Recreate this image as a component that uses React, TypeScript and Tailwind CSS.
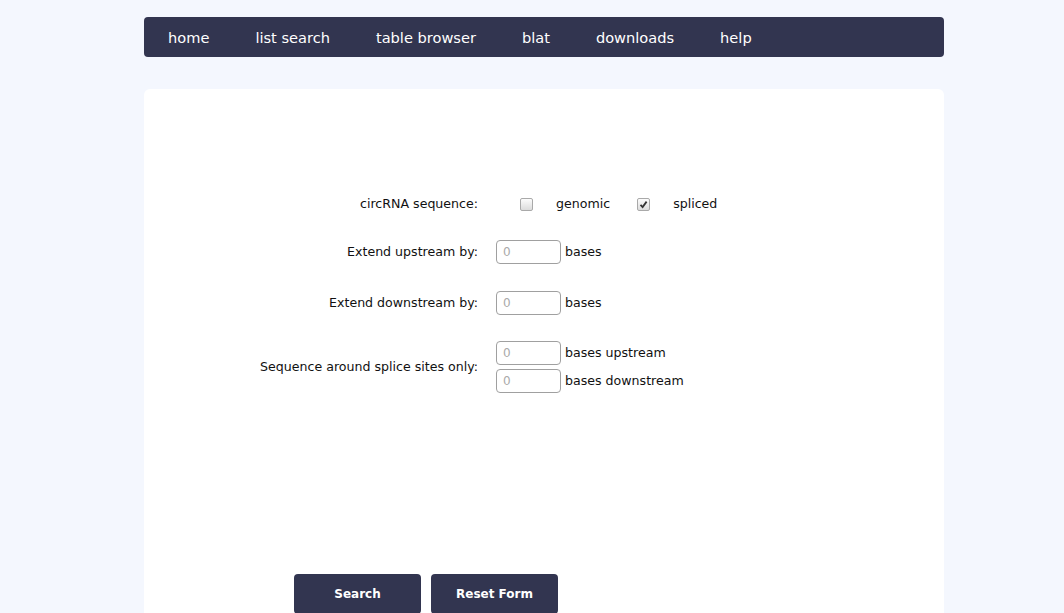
import React from 'react';

const navItems = ['home', 'list search', 'table browser', 'blat', 'downloads', 'help'];

const Box = ({ checked }: { checked?: boolean }) => (
  <span className="flex h-[13px] w-[13px] items-center justify-center rounded-[2px] border border-[#a9a9a9] bg-gradient-to-b from-[#fcfcfc] to-[#dcdcdc]">
    {checked && (
      <svg width="9" height="9" viewBox="0 0 9 9">
        <path d="M1.5 4.8 L3.6 7 L7.6 1.6" fill="none" stroke="#333" strokeWidth="1.8" />
      </svg>
    )}
  </span>
);

const NumInput = () => (
  <input
    type="text"
    placeholder="0"
    className="h-[24px] w-[65px] rounded-[4px] border border-[#a0a0a0] bg-white px-[6px] text-[12px] text-[#333] placeholder:text-[#aaa] outline-none"
  />
);

const Row = ({ label, children, className = '' }: { label: string; children: React.ReactNode; className?: string }) => (
  <div className={`flex items-center ${className}`}>
    <div className="w-[334px] text-right">{label}</div>
    <div className="ml-[18px] flex flex-col gap-[4px]">{children}</div>
  </div>
);

export default function App() {
  return (
    <div
      className="min-h-[613px] bg-[#f4f7fe] pt-[17px] text-[12.6px] text-[#111]"
      style={{ fontFamily: 'Tahoma, "DejaVu Sans", Verdana, sans-serif' }}
    >
      <div className="ml-[144px] w-[800px]">
        <nav className="flex h-[40px] items-center rounded-[4px] bg-[#323550] px-[24px] pt-[2px] text-[14.6px] text-white">
          <ul className="flex gap-[46px]">
            {navItems.map((item) => (
              <li key={item}>{item}</li>
            ))}
          </ul>
        </nav>

        <main className="mt-[32px] h-[560px] rounded-t-[6px] bg-white pt-[105px]">
          <Row label="circRNA sequence:" className="h-[20px]">
            <div className="flex items-center pt-[1px]">
              <span className="ml-[24px]"><Box /></span>
              <span className="ml-[23px]">genomic</span>
              <span className="ml-[27px]"><Box checked /></span>
              <span className="ml-[23px]">spliced</span>
            </div>
          </Row>

          <Row label="Extend upstream by:" className="mt-[26px]">
            <div className="flex items-center gap-[4px]">
              <NumInput /> <span>bases</span>
            </div>
          </Row>

          <Row label="Extend downstream by:" className="mt-[27px]">
            <div className="flex items-center gap-[4px]">
              <NumInput /> <span>bases</span>
            </div>
          </Row>

          <Row label="Sequence around splice sites only:" className="mt-[26px]">
            <div className="flex items-center gap-[4px]">
              <NumInput /> <span>bases upstream</span>
            </div>
            <div className="flex items-center gap-[4px]">
              <NumInput /> <span>bases downstream</span>
            </div>
          </Row>

          <div className="ml-[150px] mt-[181px] flex gap-[10px]">
            <button className="h-[40px] w-[127px] rounded-[4px] bg-[#323550] text-[12px] font-bold text-white">
              Search
            </button>
            <button className="h-[40px] w-[127px] rounded-[4px] bg-[#323550] text-[12px] font-bold text-white">
              Reset Form
            </button>
          </div>
        </main>
      </div>
    </div>
  );
}
